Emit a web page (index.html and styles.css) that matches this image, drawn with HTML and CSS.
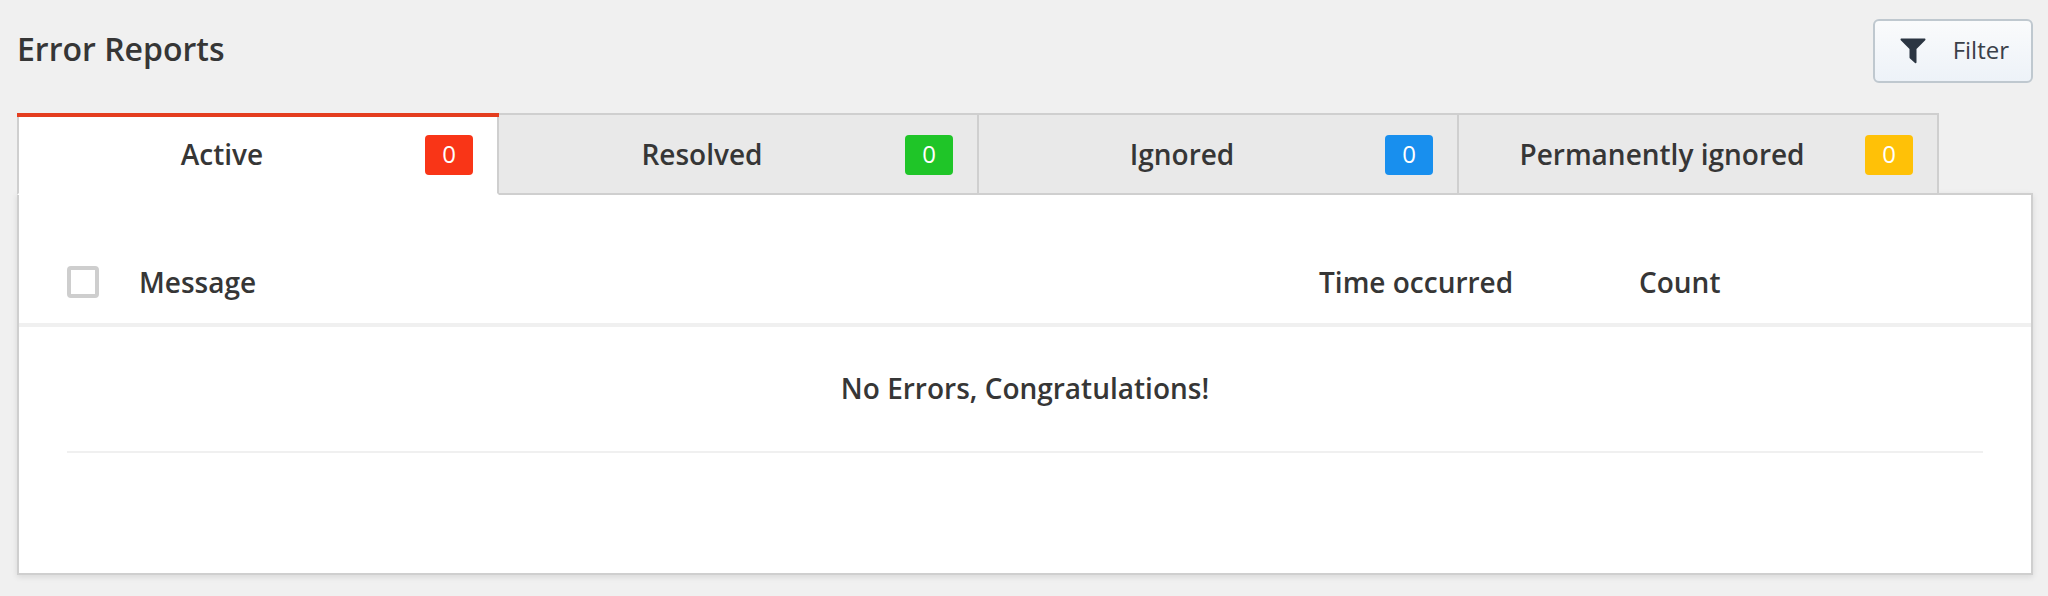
FILE: index.html
```html
<!DOCTYPE html>
<html lang="en">
<head>
    <meta charset="UTF-8">
    <meta name="viewport" content="width=device-width, initial-scale=1.0">
    <title>Error Reports</title>
    <link rel="stylesheet" href="styles.css">
</head>
<body>
    <header class="topbar">
        <h1>Error Reports</h1>
        <button class="filter" type="button">
            <svg class="filter-icon" viewBox="0 0 26 26" aria-hidden="true">
                <path d="M1 0.5H25Q26 1.2 25.2 2.2L16.5 11V24.6Q16 25.6 15 25L10 20.6Q9.5 20 9.5 19.4V11L0.8 2.2Q0 1.2 1 0.5Z"/>
            </svg>
            <span>Filter</span>
        </button>
    </header>
    <main>
        <div class="tabs" role="tablist">
            <button class="tab active" type="button" role="tab" aria-selected="true">
                <span class="label">Active</span>
                <span class="badge red">0</span>
            </button>
            <button class="tab" type="button" role="tab" aria-selected="false">
                <span class="label">Resolved</span>
                <span class="badge green">0</span>
            </button>
            <button class="tab" type="button" role="tab" aria-selected="false">
                <span class="label">Ignored</span>
                <span class="badge blue">0</span>
            </button>
            <button class="tab" type="button" role="tab" aria-selected="false">
                <span class="label">Permanently ignored</span>
                <span class="badge yellow">0</span>
            </button>
        </div>
        <div class="panel" role="tabpanel">
            <table>
                <thead>
                    <tr>
                        <th class="col-check"><input class="check" type="checkbox" aria-label="Select all"></th>
                        <th>Message</th>
                        <th class="col-time">Time occurred</th>
                        <th class="col-count">Count</th>
                    </tr>
                </thead>
                <tbody>
                    <tr>
                        <td colspan="4"><div class="empty">No Errors, Congratulations!</div></td>
                    </tr>
                </tbody>
            </table>
        </div>
    </main>
</body>
</html>
```
FILE: styles.css
```css
*{
    box-sizing: border-box;
    margin: 0;
    padding: 0;
}
body{
    background-color: #f0f0f0;
    color: #363636;
    font-family: "Open Sans", sans-serif;
    font-size: 28px;
    font-weight: 600;
    line-height: 34px;
    padding: 19px 15px 20px 17px;
}
button{
    color: inherit;
    font: inherit;
    cursor: pointer;
}
.topbar{
    display: flex;
    justify-content: space-between;
    align-items: flex-start;
    margin-bottom: 30px;
}
h1{
    font-size: 32px;
    font-weight: 600;
    line-height: 60px;
}
.filter{
    display: flex;
    align-items: center;
    gap: 27px;
    height: 64px;
    padding: 0 22px 2px 25px;
    border: 2px solid #bfc8cf;
    border-radius: 6px;
    background: linear-gradient(#fafbfc, #edf2f8);
    color: #3a4049;
    font-size: 24px;
    font-weight: 400;
}
.filter-icon{
    width: 26px;
    height: 26px;
    margin-top: 2px;
    fill: #2b3542;
}
.tabs{
    display: flex;
    position: relative;
    z-index: 1;
    margin-bottom: -2px;
}
.tab{
    display: flex;
    align-items: center;
    flex: 0 1 480px;
    min-width: 0;
    padding: 20px 24px 18px 0;
    border: 2px solid #cfcfcf;
    border-left: 0;
    background-color: #e9e9e9;
}
.tab.active{
    position: relative;
    flex-basis: 482px;
    border-left: 2px solid #cfcfcf;
    border-bottom-color: #fff;
    background-color: #fff;
}
/* red strip over the selected tab */
.tab.active::before{
    content: "";
    position: absolute;
    top: -2px;
    left: -2px;
    right: -2px;
    height: 4px;
    background-color: #e43d1f;
}
.label{
    flex: 1;
    padding-bottom: 2px;
}
.badge{
    width: 48px;
    height: 40px;
    border-radius: 4px;
    color: #fff;
    font-size: 24px;
    font-weight: 400;
    line-height: 38px;
    text-align: center;
}
.red{
    background-color: #f93517;
}
.green{
    background-color: #1fc528;
}
.blue{
    background-color: #188fee;
}
.yellow{
    background-color: #ffc107;
}
.panel{
    padding-bottom: 120px;
    border: 2px solid #cfcfcf;
    background-color: #fff;
    box-shadow: 0 2px 6px rgba(0, 0, 0, 0.1);
}
table{
    width: 100%;
    table-layout: fixed;
    border-collapse: separate;
    border-spacing: 0;
}
th{
    height: 132px;
    padding-top: 46px;
    border-bottom: 4px solid #f0f0f0;
    font-weight: 600;
    text-align: left;
    vertical-align: middle;
}
.col-check{
    width: 120px;
    padding-left: 48px;
}
.col-time{
    width: 320px;
}
.col-count{
    width: 392px;
}
.check{
    display: block;
    appearance: none;
    width: 32px;
    height: 32px;
    border: 4px solid #cecece;
    border-radius: 4px;
    background-color: #fff;
}
.empty{
    margin: 0 48px;
    padding: 44px 0 46px;
    border-bottom: 2px solid #f0f0f0;
    text-align: center;
}
```
